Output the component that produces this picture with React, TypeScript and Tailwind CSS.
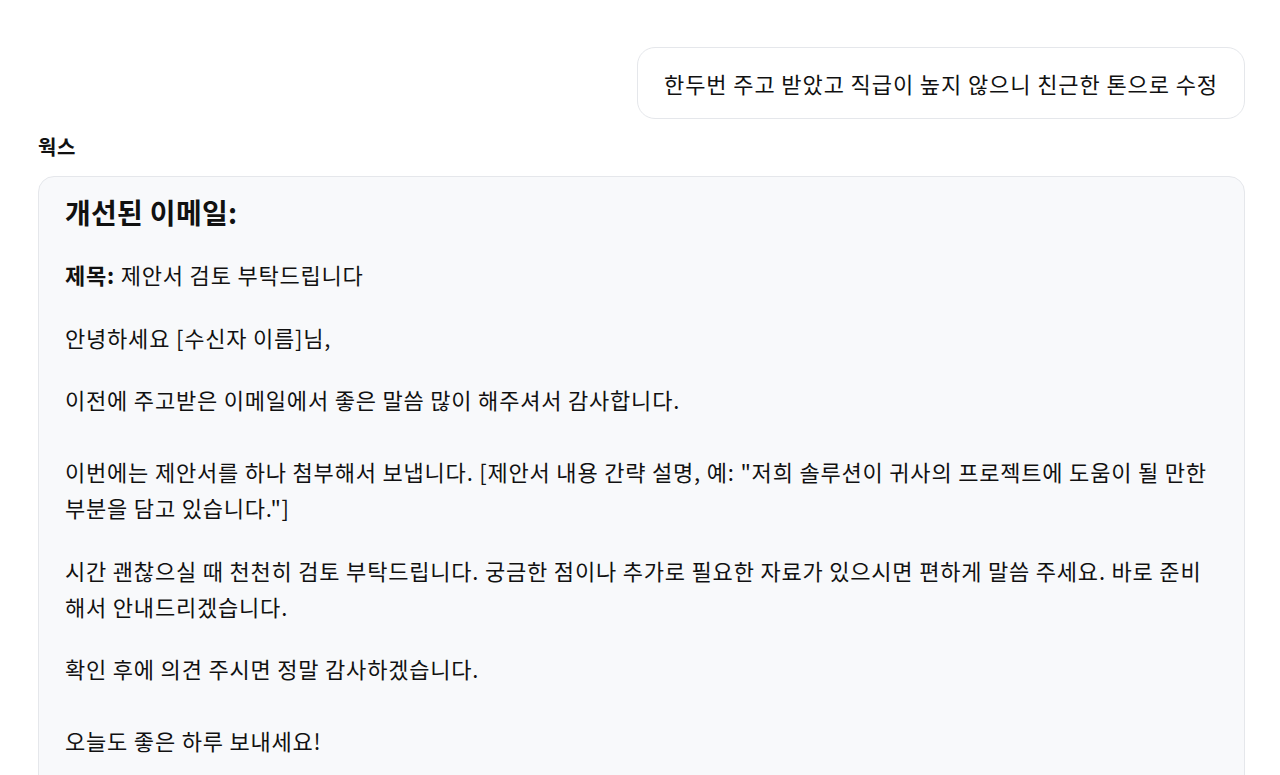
import React from "react";

export default function App() {
  return (
    <div
      className="min-h-[775px] bg-white text-[#111111] pl-[38px] pr-[35px] pt-[47px]"
      style={{ fontFamily: '"Noto Sans CJK KR", "Noto Sans", sans-serif' }}
    >
      <div className="flex justify-end">
        <div className="rounded-[18px] border border-[#e5e7eb] bg-white px-[26px] py-[17px] text-[22px] tracking-[0.9px] leading-[36px]">
          한두번 주고 받았고 직급이 높지 않으니 친근한 톤으로 수정
        </div>
      </div>
      <div className="mt-[13px] text-[20px] tracking-[0.5px] font-bold leading-[30px]">웍스</div>
      <div className="mt-[14px] rounded-[16px] border border-[#e5e7eb] bg-[#f8f9fb] px-[26px] pt-[13px] pb-[40px] text-[22px] tracking-[0.8px] leading-[36px]">
        <h2 className="text-[28px] font-bold leading-[44px] tracking-[0.3px]">개선된 이메일:</h2>
        <p className="mt-[22px]">
          <span className="font-bold">제목:</span> 제안서 검토 부탁드립니다
        </p>
        <p className="mt-[27px]">안녕하세요 [수신자 이름]님,</p>
        <p className="mt-[26px]">
          이전에 주고받은 이메일에서 좋은 말씀 많이 해주셔서 감사합니다.
          <br />
          <br />
          이번에는 제안서를 하나 첨부해서 보냅니다. [제안서 내용 간략 설명, 예: "저희 솔루션이 귀사의 프로젝트에 도움이 될 만한 부분을 담고 있습니다."]
        </p>
        <p className="mt-[27px]">
          시간 괜찮으실 때 천천히 검토 부탁드립니다. 궁금한 점이나 추가로 필요한 자료가 있으시면 편하게 말씀 주세요. 바로 준비해서 안내드리겠습니다.
        </p>
        <p className="mt-[26px]">
          확인 후에 의견 주시면 정말 감사하겠습니다.
          <br />
          <br />
          오늘도 좋은 하루 보내세요!
        </p>
      </div>
    </div>
  );
}
